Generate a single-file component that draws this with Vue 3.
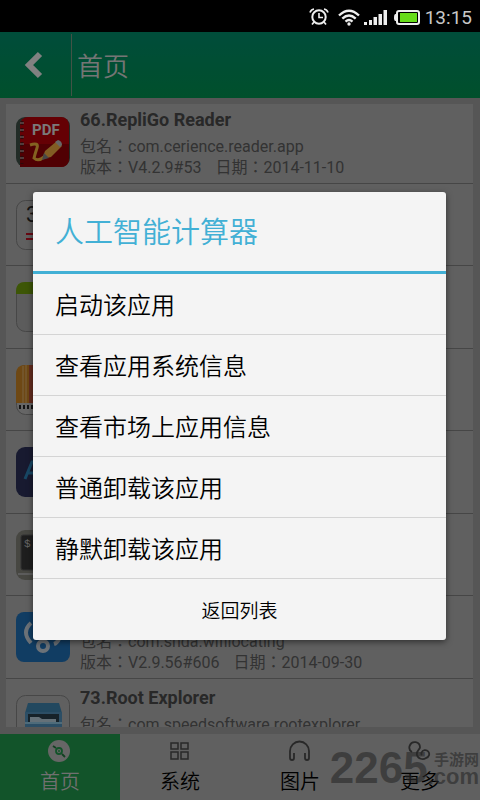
<script setup>
import { ref } from 'vue'

const apps = [
  { id: 66, icon: 'pdf', name: 'RepliGo Reader', pkg: 'com.cerience.reader.app', version: 'V4.2.9#53', date: '2014-11-10' },
  { id: 67, icon: 'calc' },
  { id: 68, icon: 'note' },
  { id: 69, icon: 'barcode' },
  { id: 70, icon: 'aida' },
  { id: 71, icon: 'terminal' },
  { id: 72, icon: 'wifi', pkg: 'com.snda.wifilocating', version: 'V2.9.56#606', date: '2014-09-30' },
  { id: 73, icon: 'folder', name: 'Root Explorer', pkg: 'com.speedsoftware.rootexplorer' },
]

const actions = ['启动该应用', '查看应用系统信息', '查看市场上应用信息', '普通卸载该应用', '静默卸载该应用']

const tabs = [
  { key: 'home', label: '首页' },
  { key: 'system', label: '系统' },
  { key: 'photo', label: '图片' },
  { key: 'more', label: '更多' },
]

const current = ref('home')
const showDialog = ref(true)
</script>

<template>
  <div class="screen">
    <div class="status">
      <svg width="20" height="18" viewBox="0 0 20 18" fill="none" stroke="#eee" stroke-width="2">
        <circle cx="10" cy="9" r="6.7" />
        <path d="M10 5v4.5h4" stroke-width="1.6" />
        <path d="M1 4.5Q2 1.5 5 1M19 4.5Q18 1.5 15 1M5 14l-2 2.5M15 14l2 2.5" stroke-width="1.7" />
      </svg>
      <svg class="wifi" width="22" height="17" viewBox="0 0 22 17" fill="none" stroke="#eee" stroke-width="2.4">
        <path d="M1 6.5Q11-3 21 6.5M4.3 9.7Q11 3.5 17.7 9.7M7.5 12.7Q11 9.5 14.5 12.7" />
        <circle cx="11" cy="15" r="1.7" fill="#eee" stroke="none" />
      </svg>
      <svg width="23" height="15" viewBox="0 0 23 15" fill="#eee">
        <path d="M0 12h3v3H0zM5 10h3v5H5zM9.5 7H13v8H9.5zM14.5 4H18v11h-3.500zM19.5 0H23v15h-3.500z" />
      </svg>
      <svg class="battery" width="26" height="15" viewBox="0 0 26 15">
        <rect x="3" y="1" width="22" height="13" rx="2" fill="#000" stroke="#eee" stroke-width="2" />
        <path d="M3 4H1.5Q0 4 0 7.5T1.5 11H3z" fill="#eee" />
        <rect x="6" y="3" width="17" height="9" fill="#66dc19" />
      </svg>
      <span class="clock">13:15</span>
    </div>

    <header class="header">
      <button class="back" aria-label="返回">
        <svg width="20" height="28" viewBox="0 0 20 28" fill="none" stroke="#d8d8d8" stroke-width="6">
          <path d="M16 3L5 14l11 11" />
        </svg>
      </button>
      <h1 class="header-title">首页</h1>
    </header>

    <main class="content">
      <div class="card">
        <ul class="list">
          <li v-for="app in apps" :key="app.id" class="row">
            <svg class="app-icon" viewBox="0 0 54 50">
              <g v-if="app.icon === 'pdf'">
                <rect width="54" height="50" rx="9" fill="#3a4a42" />
                <rect x="4" width="49" height="50" rx="8" fill="#a80008" />
                <path d="M4 27h49v14q0 9-9 9H4z" fill="#860005" />
                <path d="M6 4v43" stroke="#4a1010" stroke-width="3" stroke-dasharray="4 3" />
                <path d="M4 6h4M4 13h4M4 20h4M4 27h4M4 34h4M4 41h4" stroke="#bbb" />
                <text x="16" y="18" class="pdf-text">PDF</text>
                <path d="M14 28q9-3 7 3t-3 10q4 4 10-1" fill="none" stroke="#dba437" stroke-width="3" />
                <path d="M26 42l3-8 12-10 5 5-11 11z" fill="#d99b3c" />
                <path d="M26 43l2-7 5 5z" fill="#777" />
                <path d="M39 25l3-2q4 1 4 5l-2 2z" fill="#aaa" />
              </g>
              <g v-else-if="app.icon === 'calc'">
                <rect x=".5" y=".5" width="53" height="49" rx="9" fill="#a0a0a0" stroke="#777" />
                <text x="10" y="22" class="calc-text">3</text>
                <path d="M10 34h30M10 39h30" stroke="#b01020" stroke-width="2" />
              </g>
              <g v-else-if="app.icon === 'note'">
                <rect x=".5" y=".5" width="53" height="49" rx="9" fill="#999" stroke="#777" />
                <path d="M0 12V9q0-9 9-9h36q9 0 9 9v3z" fill="#67900b" />
              </g>
              <g v-else-if="app.icon === 'barcode'">
                <rect x=".5" y=".5" width="53" height="49" rx="9" fill="#aaa" stroke="#777" />
                <path d="M0 38V9q0-9 9-9h4v38z" fill="#b87822" />
                <path d="M13 0h32q9 0 9 9v29H13z" fill="#a84c35" />
                <path d="M7 1v37M10 0v38" stroke="#c9a46c" />
                <path d="M4 40v4M8 40v4M12 40v4M16 40v4" stroke="#222" stroke-width="2" />
              </g>
              <g v-else-if="app.icon === 'aida'">
                <rect width="54" height="50" rx="9" fill="#282c50" />
                <path d="M9 32l7-17h3l6 17M12 26h10" fill="none" stroke="#2878a8" stroke-width="3" />
              </g>
              <g v-else-if="app.icon === 'terminal'">
                <rect width="54" height="50" rx="9" fill="#77776f" />
                <rect x="5" y="5" width="44" height="35" rx="2" fill="#333" stroke="#555" />
                <path d="M2 44h50" stroke="#999" stroke-width="2" />
                <text x="8" y="17" class="term-text">$</text>
              </g>
              <g v-else-if="app.icon === 'wifi'">
                <rect width="54" height="50" rx="8" fill="#1d66a5" />
                <g fill="none" stroke="#b4bec8" stroke-width="4">
                  <circle cx="27" cy="34" r="5" />
                  <path d="M43 27q-2 4-5 5" />
                  <path d="M15 11q-10 9 0 20" />
                </g>
              </g>
              <g v-else>
                <rect x=".5" y=".5" width="53" height="49" rx="9" fill="#a0a0a0" stroke="#777" />
                <path d="M12 8h31l3 10H9z" fill="#39789e" />
                <path d="M9 17h37v33H9z" fill="#4a83a8" />
                <path d="M12 19h31v8H12z" fill="#253945" />
                <path d="M14 27v-5h9l3 2h14v3z" fill="#a9bcc9" />
                <path d="M9 27h37v2H9z" fill="#82b2cc" />
              </g>
            </svg>
            <div class="info">
              <h2 class="name">{{ app.name ? app.id + '.' + app.name : '' }}</h2>
              <p v-if="app.pkg" class="line">包名：{{ app.pkg }}</p>
              <p v-if="app.version" class="line">
                <span>版本：{{ app.version }}</span>
                <span>日期：{{ app.date }}</span>
              </p>
            </div>
          </li>
        </ul>
      </div>
    </main>

    <nav class="tabs">
      <button
        v-for="tab in tabs"
        :key="tab.key"
        class="tab"
        :class="{ active: current === tab.key }"
        @click="current = tab.key"
      >
        <svg class="tab-icon" viewBox="0 0 24 24" fill="none" stroke="#444" stroke-width="1.8">
          <g v-if="tab.key === 'home'">
            <circle cx="11" cy="12" r="11" fill="#aaa" stroke="none" />
            <circle cx="11" cy="12" r="3" stroke="#1f8a45" />
            <circle cx="11" cy="12" r="1" fill="#1f8a45" stroke="none" />
            <path d="M5 7l3 2M14 15l3 3" stroke="#1f6a38" />
          </g>
          <path
            v-else-if="tab.key === 'system'"
            stroke-width="1.5"
            d="M3 4h7v6H3zM13 4h7v6h-7zM3 13h7v7H3zM13 13h7v7h-7z"
          />
          <path
            v-else-if="tab.key === 'photo'"
            d="M6 14v5q0 2-2 2t-2-2v-7a9.5 9.5 0 0 1 19 0v7q0 2-2 2t-2-2v-5"
          />
          <path
            v-else
            d="M4 13A5.3 5.3 0 1 1 12 8.5C11.5 11 8 12 9 16C10 20 15 21 18 19A4 4 0 1 0 13.5 13.5Q13 15 14 16"
          />
        </svg>
        <span class="tab-label">{{ tab.label }}</span>
      </button>
    </nav>

    <div v-if="showDialog" class="mask">
      <section class="dialog" role="dialog" aria-labelledby="dialog-title">
        <h2 id="dialog-title" class="dialog-title">人工智能计算器</h2>
        <button v-for="action in actions" :key="action" class="action">{{ action }}</button>
        <button class="close" @click="showDialog = false">返回列表</button>
      </section>
    </div>

    <div class="watermark">
      <span class="mark-number">2265</span>
      <span class="mark-side">
        <span class="mark-cn">手游网</span>
        <span class="mark-com">.com</span>
      </span>
    </div>
  </div>
</template>

<style>
body {
  margin: 0;
  background: #000;
}
</style>

<style scoped>
.screen {
  position: relative;
  display: flex;
  flex-direction: column;
  height: 100vh;
  overflow: hidden;
  background: #909090;
  font-family: Roboto, 'Noto Sans CJK SC', sans-serif;
}
button {
  padding: 0;
  border: none;
  background: none;
  font-family: inherit;
  cursor: pointer;
}
h1,
h2,
p,
ul {
  margin: 0;
  padding: 0;
  font-weight: 400;
}
.status {
  box-sizing: border-box;
  display: flex;
  align-items: center;
  justify-content: flex-end;
  height: 32px;
  padding: 2px 8px 0 0;
  flex-shrink: 0;
  background: #000;
}
.wifi {
  margin: 0 4px 0 9px;
}
.battery {
  margin: 0 5px 0 7px;
}
.clock {
  color: #c8c8c8;
  font-size: 19px;
}
.header {
  display: flex;
  align-items: center;
  height: 66px;
  flex-shrink: 0;
  background: linear-gradient(#008062, #008549);
}
.back {
  display: flex;
  align-items: center;
  justify-content: center;
  width: 72px;
  height: 62px;
  padding-right: 4px;
  border-right: 1px solid #6f8a75;
}
.header-title {
  padding: 4px 0 0 5px;
  color: #c4c4c4;
  font-size: 26px;
  font-weight: 350;
  line-height: 62px;
}
.content {
  flex: 1;
  min-height: 0;
  display: flex;
  padding: 6px 7px 7px 6px;
}
.card {
  flex: 1;
  overflow: hidden;
  background: #a0a0a0;
}
.list {
  margin-top: -3px;
  list-style: none;
}
.row {
  box-sizing: border-box;
  display: flex;
  height: 82px;
  padding-left: 10px;
  border-bottom: 1px solid #757575;
}
.row:nth-child(odd) {
  height: 83px;
}
.app-icon {
  width: 54px;
  height: 50px;
  margin: 16px 10px 0 0;
  flex-shrink: 0;
}
.pdf-text {
  fill: #ccc;
  font-size: 15px;
  font-weight: 700;
}
.calc-text {
  fill: #222;
  font-size: 22px;
}
.term-text {
  fill: #aaa;
  font-size: 11px;
  font-family: 'Liberation Mono', monospace;
}
.info {
  padding-top: 8px;
  white-space: nowrap;
}
.name {
  height: 22px;
  margin-bottom: 5px;
  color: #444;
  font-size: 18px;
  font-weight: 700;
  line-height: 22px;
}
.line {
  display: flex;
  gap: 14px;
  color: #555;
  font-family: Roboto, 'Noto Sans CJK TC', sans-serif;
  font-size: 16px;
  line-height: 21px;
}
.tabs {
  display: flex;
  height: 66px;
  flex-shrink: 0;
  background: #a0a0a0;
}
.tab {
  flex: 1;
  display: flex;
  flex-direction: column;
  align-items: center;
  padding-top: 5px;
  color: #000;
  font-size: 20px;
  font-weight: 350;
}
.tab.active {
  background: #1f8c46;
  color: #bbb;
}
.tab-icon {
  width: 24px;
  height: 24px;
}
.tab-label {
  margin-top: 4px;
  line-height: 30px;
}
.mask {
  position: absolute;
  inset: 32px 0 0;
  display: flex;
  align-items: center;
  justify-content: center;
  padding: 0 34px 0 33px;
  background: rgba(0, 0, 0, 0.4);
}
.dialog {
  flex: 1;
  display: flex;
  flex-direction: column;
  overflow: hidden;
  border-radius: 3px;
  background: #f4f4f4;
  box-shadow: 0 2px 6px rgba(0, 0, 0, 0.5);
}
.dialog-title {
  padding: 4px 22px 0;
  border-bottom: 3px solid #42b0d5;
  color: #42b0d5;
  font-size: 29px;
  font-weight: 350;
  line-height: 75px;
}
.action {
  padding: 4px 22px 0;
  border-bottom: 1px solid #d4d4d4;
  color: #000;
  font-size: 24px;
  font-weight: 350;
  line-height: 56px;
  text-align: left;
}
.close {
  padding-top: 4px;
  color: #000;
  font-size: 19px;
  font-weight: 350;
  line-height: 57px;
}
.watermark {
  position: absolute;
  right: 1px;
  bottom: 14px;
  display: flex;
  align-items: center;
  color: rgba(40, 40, 40, 0.6);
  font-weight: 700;
  pointer-events: none;
}
.mark-number {
  font-family: 'Liberation Sans', sans-serif;
  font-size: 44px;
  line-height: 36px;
}
.mark-side {
  display: flex;
  flex-direction: column;
  align-items: flex-end;
}
.mark-cn {
  font-size: 15px;
  line-height: 18px;
}
.mark-com {
  font-family: 'Liberation Sans', sans-serif;
  font-size: 22px;
  line-height: 16px;
}
</style>
